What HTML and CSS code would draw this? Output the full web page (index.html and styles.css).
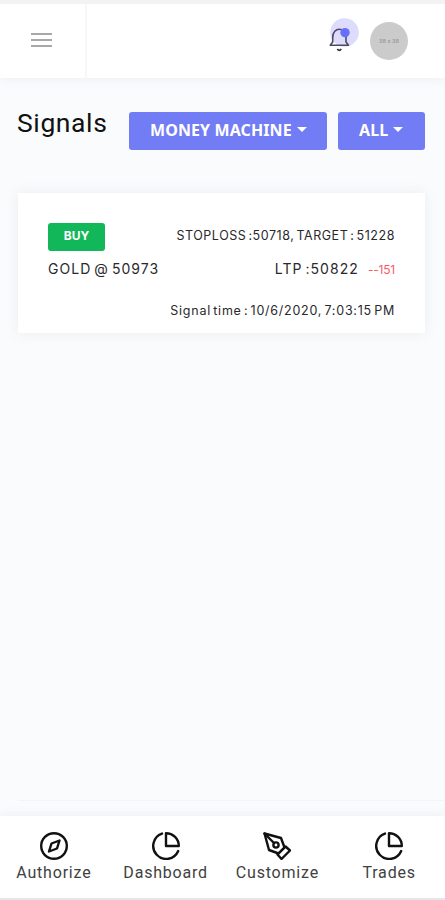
FILE: index.html
```html
<!DOCTYPE html>
<html lang="en">
<head>
	<meta charset="UTF-8">
	<meta name="viewport" content="width=device-width, initial-scale=1">
	<title>Signals</title>
	<link rel="stylesheet" href="styles.css">
</head>
<body>
	<header class="topbar">
		<div class="menu">
			<button class="toggle" aria-label="Menu"><span></span><span></span><span></span></button>
		</div>
		<div class="user">
			<div class="bell">
				<svg width="32" height="34" viewBox="0 0 32 34">
					<circle cx="16.5" cy="14.5" r="14.3" fill="#dedcfc"/>
					<path d="M2.2 27.2 L4.7 24 V19.5 C4.7 8.5 18 8.5 18 19.5 V24 L20.5 27.2 Z" fill="none" stroke="#4d4a63" stroke-width="1.6" stroke-linejoin="round"/>
					<path d="M9.3 31 Q11.3 33.6 13.3 31" fill="none" stroke="#333" stroke-width="1.7"/>
					<circle cx="17" cy="14.6" r="4.7" fill="#6770fa"/>
				</svg>
			</div>
			<div class="avatar">38 x 38</div>
		</div>
	</header>

	<main>
		<div class="title">
			<h1>Signals</h1>
			<button class="btn money"><span>MONEY MACHINE</span><i class="caret"></i></button>
			<button class="btn all"><span>ALL</span><i class="caret"></i></button>
		</div>

		<div class="card">
			<div class="row first">
				<span class="badge">BUY</span>
				<span class="levels">STOPLOSS :50718, TARGET : 51228</span>
			</div>
			<div class="row second">
				<span class="symbol">GOLD @ 50973</span>
				<span class="price"><span class="ltp">LTP :50822</span><span class="loss">--151</span></span>
			</div>
			<div class="row third">
				<span class="time">Signal time : 10/6/2020, 7:03:15 PM</span>
			</div>
		</div>
	</main>

	<div class="line"></div>

	<nav class="tabs">
		<a class="tab">
			<svg viewBox="0 0 28 28">
				<circle cx="14" cy="14" r="12.8"/>
				<path d="M19.5 8.5 L17 16.5 L9 19.5 L11.5 11.5 Z"/>
			</svg>
			<span>Authorize</span>
		</a>
		<a class="tab">
			<svg viewBox="0 0 28 28">
				<path d="M10 1.6 A13 13 0 1 0 26.2 19"/>
				<path d="M14 1.2 A12.8 12.8 0 0 1 26.8 14 H14 Z"/>
			</svg>
			<span>Dashboard</span>
		</a>
		<a class="tab">
			<svg viewBox="0 0 28 28">
				<path d="M1.5 1.5 L18 6 L21.5 15.5 L15.5 21.5 L6 18 Z"/>
				<path d="M22.5 14.5 L27 18.5 L18.5 27 L14.5 22.5 Z"/>
				<path d="M1.5 1.5 L11 11"/>
				<circle cx="13" cy="13" r="2.6"/>
			</svg>
			<span>Customize</span>
		</a>
		<a class="tab">
			<svg viewBox="0 0 28 28">
				<path d="M10 1.6 A13 13 0 1 0 26.2 19"/>
				<path d="M14 1.2 A12.8 12.8 0 0 1 26.8 14 H14 Z"/>
			</svg>
			<span>Trades</span>
		</a>
	</nav>
</body>
</html>
```
FILE: styles.css
```css
*{
	box-sizing: border-box;
}
body{
	margin: 0;
	height: 900px;
	display: flex;
	flex-direction: column;
	overflow: hidden;
	background: #fafbfd;
	border-top: 4px solid #f3f3f3;
	border-bottom: 2px solid #e6e6e6;
	font-family: Roboto, "Noto Sans", sans-serif;
	color: #29292c;
}
button{
	border: 0;
	padding: 0;
}
.topbar{
	flex: none;
	display: flex;
	height: 74px;
	background: #fff;
	box-shadow: 0 1px 10px rgba(80,90,110,.08);
}
.menu{
	width: 87px;
	padding: 28px 0 0 31px;
	border-right: 2px solid #f7f7f8;
}
.toggle{
	display: flex;
	flex-direction: column;
	gap: 4px;
	width: 21px;
	margin-top: 1px;
	background: none;
}
.toggle span{
	height: 2px;
	width: 21px;
	background: #a8a8a8;
}
.user{
	flex: 1;
	display: flex;
	justify-content: flex-end;
	padding: 14px 37px 0 0;
}
.bell{
	width: 32px;
	margin-right: 10px;
}
.bell svg{
	display: block;
}
.avatar{
	width: 38px;
	height: 38px;
	margin-top: 4px;
	border-radius: 50%;
	background: #cbcbcb;
	color: #a0a0a0;
	font-size: 6px;
	font-weight: 700;
	line-height: 38px;
	text-align: center;
}
main{
	padding: 34px 20px 0 18px;
}
.title{
	display: flex;
	height: 38px;
}
h1{
	width: 111px;
	margin: -8px 0 0 -1px;
	padding-right: 1px;
	font-size: 26.5px;
	font-weight: 400;
	line-height: 38px;
	letter-spacing: .6px;
	color: #111;
	white-space: nowrap;
}
.btn{
	display: flex;
	align-items: center;
	height: 38px;
	padding: 0 20px 3px 21px;
	border-radius: 3px;
	background: #727cf5;
	color: #fff;
	font-family: "Noto Sans", sans-serif;
	font-size: 16px;
	font-weight: 700;
	letter-spacing: .1px;
	white-space: nowrap;
}
.money{
	width: 198px;
	margin: 0 11px 0 1px;
}
.all{
	width: 87px;
}
.caret{
	margin-left: 5px;
	border: 5px solid transparent;
	border-top-color: #fff;
	border-bottom: 0;
}
.card{
	height: 140px;
	margin-top: 43px;
	padding: 30px 30px 0;
	background: #fff;
	box-shadow: 0 0 12px rgba(154,161,171,.16);
	font-family: Inter, "Noto Sans", sans-serif;
	word-spacing: -2px;
}
.row{
	display: flex;
	justify-content: space-between;
	white-space: nowrap;
}
.first{
	height: 28px;
}
.second{
	height: 35px;
	line-height: 35px;
}
.third{
	justify-content: flex-end;
	margin-top: 12px;
	line-height: 25px;
}
.badge{
	width: 57px;
	height: 28px;
	border-radius: 3px;
	background: #12b759;
	color: #fff;
	font-size: 12px;
	font-weight: 700;
	line-height: 26px;
	text-align: center;
}
.levels{
	font-size: 12.5px;
	line-height: 26px;
	letter-spacing: .55px;
}
.symbol, .ltp{
	font-size: 14px;
	letter-spacing: 1.05px;
}
.symbol{
	line-height: 36px;
}
.loss{
	margin-left: 9px;
	font-size: 12px;
	letter-spacing: -.2px;
	color: #f85c62;
}
.time{
	font-size: 12.5px;
	letter-spacing: .76px;
}
.line{
	margin: auto 0 15px 18px;
	height: 1px;
	background: #f3f4f7;
}
.tabs{
	flex: none;
	display: flex;
	height: 82px;
	margin-left: -2px;
	background: #fff;
	box-shadow: 0 -1px 10px rgba(80,90,110,.08);
}
.tab{
	flex: 1;
	display: flex;
	flex-direction: column;
	align-items: center;
	padding-top: 16px;
	font-size: 16px;
	line-height: 26px;
	letter-spacing: .8px;
	color: #414141;
}
.tab svg{
	width: 28px;
	height: 28px;
	fill: none;
	stroke: #111;
	stroke-width: 2.4;
	stroke-linejoin: round;
	stroke-linecap: round;
}
```
